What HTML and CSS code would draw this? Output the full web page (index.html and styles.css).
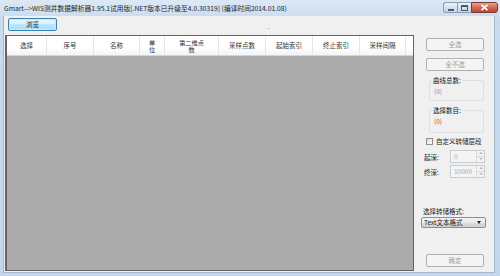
FILE: index.html
```html
<!DOCTYPE html>
<html>
<head>
<meta charset="utf-8">
<link rel="stylesheet" href="styles.css">
</head>
<body>
<div class="window">
  <div class="titlebar">
    <div class="title">Gmart-->WIS测井数据解析器1.95.1试用版[.NET版本已升级至4.0.30319] (编译时间2014.01.08)</div>
    <div class="caption-btns">
      <div class="cbtn min"><span class="min-glyph"></span></div>
      <div class="cbtn max"><span class="max-glyph"></span></div>
      <div class="cbtn close">
        <svg width="9" height="7" viewBox="0 0 9 7"><path d="M1.5 0.8 L7.5 6.2 M7.5 0.8 L1.5 6.2" stroke="#fff" stroke-width="1.6"/></svg>
      </div>
    </div>
  </div>
  <div class="client">
    <div class="main">
      <div class="toolbar">
        <button class="btn browse">浏览</button>
        <span class="dot"></span>
      </div>
      <div class="grid">
        <div class="grid-head">
          <div class="hc w1">选择</div>
          <div class="hc w2">序号</div>
          <div class="hc w3">名称</div>
          <div class="hc w4">单<br>位</div>
          <div class="hc w5">第二维点<br>数</div>
          <div class="hc w6">采样点数</div>
          <div class="hc w7">起始索引</div>
          <div class="hc w8">终止索引</div>
          <div class="hc w9">采样间隔</div>
          <div class="hc rest"></div>
        </div>
        <div class="grid-body"></div>
      </div>
    </div>
    <div class="side">
      <button class="btn dis b-all">全选</button>
      <button class="btn dis b-none">全不选</button>
      <fieldset class="grp g1">
        <legend>曲线总数:</legend>
        <span class="val blue">(0)</span>
      </fieldset>
      <fieldset class="grp g2">
        <legend>选择数目:</legend>
        <span class="val red">(0)</span>
      </fieldset>
      <label class="chk"><span class="box"></span>自定义转储层段</label>
      <div class="spin-row r1">
        <span class="lbl">起深:</span>
        <div class="spin"><span class="sv">0</span><span class="arrows"><span class="up"></span><span class="down"></span></span></div>
      </div>
      <div class="spin-row r2">
        <span class="lbl">终深:</span>
        <div class="spin"><span class="sv">10000</span><span class="arrows"><span class="up"></span><span class="down"></span></span></div>
      </div>
      <div class="fmt-lbl">选择转储格式:</div>
      <div class="combo"><span>Text文本格式</span><span class="carrow"></span></div>
      <button class="btn dis ok">确定</button>
    </div>
  </div>
</div>
</body>
</html>
```
FILE: styles.css
```css
* { box-sizing: border-box; }
html, body { margin: 0; padding: 0; }
body {
  width: 500px; height: 276px; overflow: hidden;
  font-family: "Noto Sans CJK SC", "Liberation Sans", sans-serif;
  font-size: 6.5px; color: #222;
}
.window {
  width: 500px; height: 276px;
  background: linear-gradient(#dde8f4, #c9dbee 20px, #c3d6ec);
  display: flex; flex-direction: column;
  padding: 0 5px 3px 3px;
}
.titlebar {
  height: 16px; display: flex; align-items: flex-start; position: relative;
}
.title {
  font-size: 6.75px; line-height: 8px; margin-top: 4px; margin-left: 1px; color: #1e1e1e;
  white-space: nowrap;
}
.caption-btns {
  position: absolute; right: -3px; top: 2px; display: flex;
}
.cbtn {
  height: 11px; border: 1px solid #8a9db5; display: flex; align-items: center; justify-content: center;
}
.cbtn.min, .cbtn.max {
  width: 14px; background: linear-gradient(#eef3fa, #d4e0ee 50%, #c7d6e8);
}
.cbtn.min { border-radius: 3px 0 0 3px; border-right: none; }
.cbtn.max { border-right: none; }
.cbtn.close {
  width: 27px; border-color: #7a3a3a; border-radius: 0 3px 3px 0;
  background: linear-gradient(#e8a394, #d26a56 50%, #c0452f);
}
.min-glyph { width: 6px; height: 2px; background: #4a5a6e; margin-top: 4px; }
.max-glyph { width: 7px; height: 6px; border: 1px solid #4a5a6e; border-top-width: 2px; }
.client {
  flex: 1; background: #f0f0f0; display: flex;
  padding: 2px 0 1px 1px;
  border: 1px solid #a9b8c9; border-top: none;
}
.main { width: 409px; display: flex; flex-direction: column; }
.toolbar { height: 13px; display: flex; align-items: flex-start; padding-left: 3px; position: relative; }
.dot { position: absolute; left: 263px; top: 10px; width: 1px; height: 1px; background: #9a9a9a; }
.btn {
  font-family: inherit; font-size: 6.5px; padding: 0; line-height: 11px;
  border: 1px solid #707070; border-radius: 2px;
  background: linear-gradient(#f2f2f2, #ebebeb 50%, #dddddd 50%, #cfcfcf);
  color: #222; display: block;
}
.browse {
  width: 49px; height: 13px;
  border-color: #3c7fb1;
  background: linear-gradient(#eaf6fd, #d9f0fc 50%, #bee6fd 50%, #a7d9f5);
  box-shadow: inset 0 0 0 1px #cde9f8;
}
.btn.dis {
  width: 58px; height: 13px; border-color: #adb2b5;
  background: #f4f4f4; color: #a0a0a0;
}
.grid {
  flex: 1; margin-top: 4px; border: 1px solid #646464; border-left-width: 2px;
  display: flex; flex-direction: column; background: #ababab;
}
.grid-head {
  height: 20px; display: flex; background: linear-gradient(#ffffff, #ffffff 60%, #f3f4f6);
  border-bottom: 1px solid #d5d5d5;
}
.hc {
  display: flex; align-items: center; justify-content: center; text-align: center;
  line-height: 7.5px; color: #333; border-right: 1px solid #e3e5e8; height: 100%;
}
.hc.w4, .hc.w5 { font-size: 6.2px; line-height: 7.5px; padding-top: 1px; }
.hc.rest { flex: 1; border-right: none; }
.w1 { width: 40px; }
.w2 { width: 47px; }
.w3 { width: 46px; }
.w4 { width: 25px; }
.w5 { width: 54px; }
.w6 { width: 47px; }
.w7 { width: 47px; }
.w8 { width: 47px; }
.w9 { width: 46px; }
.grid-body { flex: 1; }
.side {
  flex: 1; display: flex; flex-direction: column; padding-left: 12px; position: relative;
}
.b-all { margin-top: 20px; }
.b-none { margin-top: 7px; }
.grp {
  margin: 6px 0 0 3px; padding: 0 0 0 4px; width: 55px; height: 24px;
  border: 1px solid #dcdfe3; border-radius: 2px;
}
.grp legend { padding: 0 1px; margin-left: -2px; line-height: 7px; color: #111; }
.g2 { margin-top: 6px; height: 26px; }
.val { display: block; margin-top: 4px; line-height: 7px; }
.blue { color: #6f8fc4; }
.red { color: #c43c3c; }
.chk { display: flex; align-items: center; margin-top: 5px; line-height: 7px; }
.box {
  width: 7px; height: 7px; border: 1px solid #8e8f8f; background: linear-gradient(135deg, #dcdcdc, #f8f8f8);
  margin-right: 3px;
}
.spin-row { display: flex; align-items: center; margin-left: -2px; }
.r1 { margin-top: 5px; }
.r2 { margin-top: 2px; }
.lbl { width: 26px; }
.spin {
  width: 35px; height: 13px; border: 1px solid #c9cccf; background: #f4f4f4;
  display: flex; justify-content: space-between; color: #a8a8a8;
}
.sv { padding-left: 3px; line-height: 11px; }
.arrows { width: 8px; display: flex; flex-direction: column; border-left: 1px solid #dadada; }
.up, .down { flex: 1; position: relative; }
.up { border-bottom: 1px solid #dadada; }
.up::after, .down::after {
  content: ""; position: absolute; left: 2px; top: 1px;
  border-left: 2px solid transparent; border-right: 2px solid transparent;
}
.up::after { border-bottom: 2px solid #b8b8b8; }
.down::after { border-top: 2px solid #b8b8b8; }
.fmt-lbl { margin-top: 30px; margin-left: -3px; line-height: 7px; }
.combo {
  margin: 2px 0 0 -5px; width: 65px; height: 11px; border: 1px solid #8e8f8f; border-radius: 2px;
  background: linear-gradient(#f2f2f2, #ebebeb 50%, #dddddd 50%, #cfcfcf);
  display: flex; align-items: center; justify-content: space-between; padding: 0 4px 0 2px;
  line-height: 7px;
}
.carrow { border-left: 2px solid transparent; border-right: 2px solid transparent; border-top: 3px solid #222; }
.ok { margin-top: 26px; }
```
